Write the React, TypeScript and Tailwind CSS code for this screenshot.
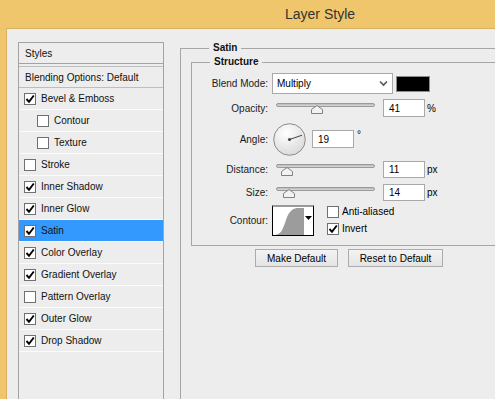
import React from "react";

const font = { fontFamily: '"Liberation Sans", Arial, sans-serif' };

const Check = ({ checked }: { checked: boolean }) => (
  <span className="flex h-[12px] w-[12px] shrink-0 items-center justify-center border border-[#707070] bg-white">
    {checked && (
      <svg width="10" height="10" viewBox="0 0 10 10">
        <path d="M1.5 5 L4 7.8 L8.8 1.5" fill="none" stroke="#000" strokeWidth="1.9" />
      </svg>
    )}
  </span>
);

const styleRows = [
  { label: "Bevel & Emboss", checked: true, indent: false },
  { label: "Contour", checked: false, indent: true },
  { label: "Texture", checked: false, indent: true },
  { label: "Stroke", checked: false, indent: false },
  { label: "Inner Shadow", checked: true, indent: false },
  { label: "Inner Glow", checked: true, indent: false },
  { label: "Satin", checked: true, indent: false, active: true },
  { label: "Color Overlay", checked: true, indent: false },
  { label: "Gradient Overlay", checked: true, indent: false },
  { label: "Pattern Overlay", checked: false, indent: false },
  { label: "Outer Glow", checked: true, indent: false },
  { label: "Drop Shadow", checked: true, indent: false },
];

const Label = ({ children }: { children: React.ReactNode }) => (
  <span className="w-[76px] shrink-0 text-right text-[10px] text-[#1b1b1b]">{children}</span>
);

const Input = ({ value, h = "h-[18px]" }: { value: string; h?: string }) => (
  <span className={`flex ${h} w-[42px] shrink-0 items-center border border-[#a9a9a9] bg-white pl-[5px] text-[10px] text-black`}>
    {value}
  </span>
);

const Slider = ({ thumb, trackTop, thumbTop }: { thumb: number; trackTop: string; thumbTop: string }) => (
  <span className="relative h-full w-[111px] shrink-0">
    <span className={`absolute left-[4px] ${trackTop} h-[4px] w-[99px] rounded-[2px] border border-[#9a9a9a] bg-gradient-to-b from-[#b8b8b8] to-[#dcdcdc]`} />
    <svg className={`absolute ${thumbTop}`} style={{ left: thumb }} width="12" height="9" viewBox="0 0 12 9">
      <path d="M0.5 8.5 L0.5 4.5 L6 0.5 L11.5 4.5 L11.5 8.5 Z" fill="#f2f2f2" stroke="#808080" />
    </svg>
  </span>
);

export default function App() {
  return (
    <div className="flex h-[399px] w-[495px] flex-col overflow-hidden bg-[#f0c66c]" style={font}>
      <div className="flex h-[28px] shrink-0 items-center pl-[285px] text-[14px] text-[#333]">Layer Style</div>
      <div className="ml-[6px] flex flex-1 gap-[16px] border-l border-t border-[#d6b160] bg-[#ededed] pl-[11px] pt-[13px]">
        {/* styles list */}
        <div className="w-[146px] shrink-0 border border-[#a3a3a3] pt-[1px] text-[10px] text-[#111]">
          <div className="flex h-[20px] items-center border-b border-[#a3a3a3] pl-[6px]">Styles</div>
          <div className="h-[2px]" />
          <div className="flex h-[22px] items-center border-b border-t border-[#bdbdbd] pl-[6px]">Blending Options: Default</div>
          {styleRows.map((r) => (
            <div
              key={r.label}
              className={`flex h-[22px] items-center gap-[5px] border-b border-[#fbfbfb] ${r.indent ? "pl-[18px]" : "pl-[5px]"} ${r.active ? "bg-[#3399ff]" : ""}`}
            >
              <Check checked={r.checked} />
              <span>{r.label}</span>
            </div>
          ))}
        </div>

        {/* settings */}
        <fieldset className="h-[400px] w-[340px] shrink-0 border-l border-t border-[#a6a6a6] pl-[10px] pt-0">
          <legend className="ml-[18px] px-[4px] text-[10px] font-bold leading-[12px] text-[#111]">Satin</legend>
          <fieldset className="mt-[2px] border-b border-l border-t border-[#a6a6a6] pb-[9px]">
            <legend className="ml-[18px] px-[4px] text-[10px] font-bold leading-[12px] text-[#111]">Structure</legend>

            <div className="mt-[5px] flex h-[21px] items-center">
              <Label>Blend Mode:</Label>
              <span className="ml-[4px] flex h-[21px] w-[121px] shrink-0 items-center justify-between border border-[#a9a9a9] bg-white pl-[4px] pr-[4px] text-[10px] text-black">
                Multiply
                <svg width="9" height="7" viewBox="0 0 9 7">
                  <path d="M1 1.5 L4.5 5 L8 1.5" fill="none" stroke="#555" strokeWidth="1.6" />
                </svg>
              </span>
              <span className="ml-[3px] h-[16px] w-[34px] border border-[#8c8c8c] bg-black" />
            </div>

            <div className="mt-[5px] flex h-[18px] items-center">
              <Label>Opacity:</Label>
              <span className="ml-[4px] flex h-full">
                <Slider thumb={39} trackTop="top-[4px]" thumbTop="top-[6px]" />
              </span>
              <Input value="41" />
              <span className="ml-[2px] text-[10px] text-black">%</span>
            </div>

            <div className="mt-[6px] flex h-[32px] items-center">
              <Label>Angle:</Label>
              <svg className="ml-[5px]" width="33" height="33" viewBox="0 0 33 33">
                <defs>
                  <radialGradient id="dial" cx="0.4" cy="0.3" r="0.8">
                    <stop offset="0" stopColor="#ffffff" />
                    <stop offset="1" stopColor="#d6d6d6" />
                  </radialGradient>
                </defs>
                <circle cx="16.5" cy="16.5" r="15.8" fill="url(#dial)" stroke="#8a8a8a" />
                <line x1="16.5" y1="16.5" x2="29" y2="12.2" stroke="#444" strokeWidth="1" />
                <circle cx="16.5" cy="16.5" r="1.6" fill="#444" />
              </svg>
              <span className="ml-[6px]">
                <Input value="19" />
              </span>
              <span className="ml-[3px] self-start pt-[4px] text-[10px] text-black">°</span>
            </div>

            <div className="mt-[6px] flex h-[17px] items-center">
              <Label>Distance:</Label>
              <span className="ml-[4px] flex h-full">
                <Slider thumb={9} trackTop="top-[3px]" thumbTop="top-[6px]" />
              </span>
              <Input value="11" h="h-[17px]" />
              <span className="ml-[2px] text-[10px] text-black">px</span>
            </div>

            <div className="mt-[6px] flex h-[17px] items-center">
              <Label>Size:</Label>
              <span className="ml-[4px] flex h-full">
                <Slider thumb={11} trackTop="top-[3px]" thumbTop="top-[5px]" />
              </span>
              <Input value="14" h="h-[17px]" />
              <span className="ml-[2px] text-[10px] text-black">px</span>
            </div>

            <div className="mt-[4px] flex h-[31px] items-center">
              <Label>Contour:</Label>
              <span className="ml-[4px] flex h-[31px] w-[42px] shrink-0 border border-t-2 border-black border-t-[#9a9a9a] bg-white">
                <svg width="31" height="28" viewBox="0 0 31 28">
                  <path d="M2 28 C 8 27, 9 24, 12 16 C 15 6, 18 2, 24 1 L31 1 L31 28 Z" fill="#9c9c9c" />
                </svg>
                <span className="flex flex-1 items-start justify-center pt-[9px]">
                  <svg width="7" height="4" viewBox="0 0 7 4">
                    <path d="M0 0 L7 0 L3.5 4 Z" fill="#000" />
                  </svg>
                </span>
              </span>
              <span className="ml-[13px] flex flex-col gap-[5px] text-[10px] leading-[12px] text-black">
                <span className="flex items-center gap-[3px]">
                  <Check checked={false} />
                  Anti-aliased
                </span>
                <span className="flex items-center gap-[3px]">
                  <Check checked={true} />
                  Invert
                </span>
              </span>
            </div>
          </fieldset>

          <div className="ml-[64px] mt-[3px] flex gap-[10px] text-[10px] text-black">
            <span className="flex h-[18px] w-[83px] items-center justify-center border border-[#acacac] bg-gradient-to-b from-[#f3f3f3] to-[#e4e4e4]">
              Make Default
            </span>
            <span className="flex h-[18px] w-[95px] items-center justify-center border border-[#acacac] bg-gradient-to-b from-[#f3f3f3] to-[#e4e4e4]">
              Reset to Default
            </span>
          </div>
        </fieldset>
      </div>
    </div>
  );
}
